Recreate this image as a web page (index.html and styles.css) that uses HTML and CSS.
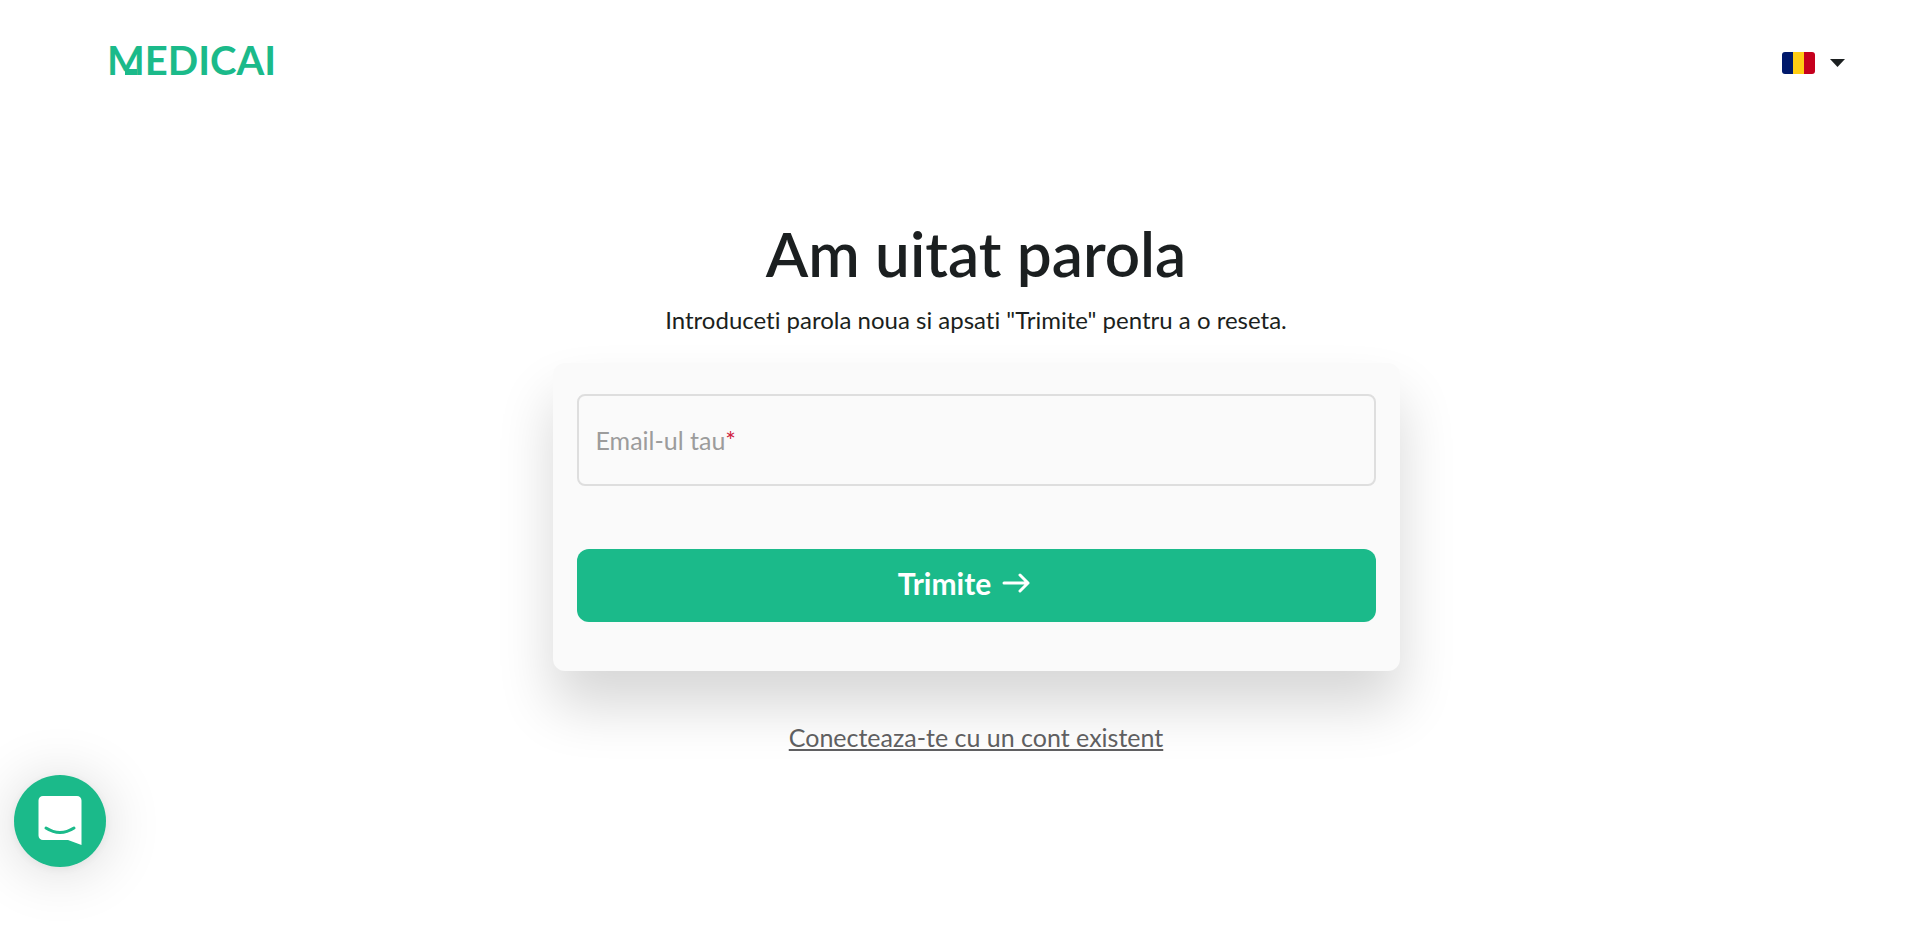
FILE: index.html
```html
<!DOCTYPE html>
<html lang="ro">
<head>
<meta charset="utf-8">
<meta name="viewport" content="width=device-width, initial-scale=1">
<title>Am uitat parola</title>
<link rel="stylesheet" href="styles.css">
</head>
<body>
<header class="topbar">
  <a class="logo" href="#" aria-label="MEDICAI">
    <svg viewBox="0 0 180 60" width="180" height="60" fill="currentColor">
      <text class="logo-text" x="0" y="45">MEDICAI</text>
      <path d="M18 39h12v6H18z"/>
    </svg>
  </a>
  <button class="language" type="button" aria-label="Limba" aria-haspopup="listbox">
    <svg viewBox="0 0 33 22" width="33" height="22">
      <clipPath id="flag"><rect width="33" height="22" rx="3"/></clipPath>
      <g clip-path="url(#flag)">
        <rect width="11" height="22" fill="#00196b"/>
        <rect x="11" width="11" height="22" fill="#ffcd14"/>
        <rect x="22" width="11" height="22" fill="#c5001d"/>
      </g>
    </svg>
    <svg viewBox="0 0 15 8" width="15" height="8"><path d="M0 0h15L7.500 8z" fill="#1b1f20"/></svg>
  </button>
</header>
<main class="content">
  <h1 class="title">Am uitat parola</h1>
  <p class="subtitle">Introduceti parola noua si apsati "Trimite" pentru a o reseta.</p>
  <form class="card">
    <div class="field">
      <input class="field-input" id="email" type="email" required placeholder=" ">
      <label class="field-label" for="email">Email-ul tau<span class="required">*</span></label>
    </div>
    <button class="submit" type="submit">Trimite
      <svg viewBox="0 0 28 20" width="28" height="20" fill="none" stroke="currentColor" stroke-width="3" stroke-linecap="round" stroke-linejoin="round"><path d="M2 10h24M18 2l8 8-8 8"/></svg>
    </button>
  </form>
  <a class="login-link" href="#">Conecteaza-te cu un cont existent</a>
</main>
<button class="chat" type="button" aria-label="Chat">
  <svg viewBox="0 0 44 50" width="44" height="50">
    <path d="M5 0h34a4.500 4.500 0 0 1 4.500 4.500V49L30 44H5a4.500 4.500 0 0 1-4.500-4.500v-35A4.500 4.500 0 0 1 5 0z" fill="#fff"/>
    <path d="M8 32q14 9 28 0" fill="none" stroke="#1bba8a" stroke-width="3" stroke-linecap="round"/>
  </svg>
</button>
</body>
</html>
```
FILE: styles.css
```css
* {
  box-sizing: border-box;
}

body {
  margin: 0;
  min-height: 100vh;
  padding: 30px 75px 40px 107px;
  background: #fff;
  color: #1b1f20;
  font-family: Lato, "Liberation Sans", sans-serif;
  font-size: 24px;
  font-variant-ligatures: none;
  line-height: 32px;
}

button {
  border: 0;
  padding: 0;
  font: inherit;
  cursor: pointer;
}

svg {
  display: block;
}

.topbar {
  display: flex;
  align-items: flex-start;
  justify-content: space-between;
}

.logo {
  color: #1bba8a;
}

.logo-text {
  font-size: 40px;
  font-weight: 700;
}

.language {
  display: flex;
  align-items: center;
  gap: 15px;
  margin-top: 22px;
  background: none;
}

.content {
  display: flex;
  flex-direction: column;
  align-items: center;
  padding-top: 125px;
}

.title {
  margin: 0;
  font-size: 62px;
  font-weight: 600;
  line-height: 76px;
}

.subtitle {
  margin: 13px 0 27px;
}

.card {
  width: 100%;
  max-width: 847px;
  padding: 31px 24px 49px;
  border-radius: 12px;
  background: #fafafa;
  box-shadow: 0 35px 56px rgba(0, 0, 0, 0.16);
}

.field {
  position: relative;
  margin-bottom: 63px;
}

.field-input {
  display: block;
  width: 100%;
  height: 92px;
  padding: 0 18px;
  border: 2px solid #dedede;
  border-radius: 8px;
  background: transparent;
  font: inherit;
}

.field-label {
  position: absolute;
  top: 30px;
  left: 19px;
  color: #9c9c9c;
  font-size: 25px;
}

.field-input:not(:placeholder-shown) + .field-label {
  display: none;
}

.required {
  color: #d0213f;
}

.submit {
  display: flex;
  align-items: center;
  justify-content: center;
  gap: 11px;
  width: 100%;
  min-height: 73px;
  padding: 0 24px 5px 0;
  border-radius: 12px;
  background: #1bba8a;
  color: #fff;
  font-size: 30px;
  font-weight: 700;
}

.login-link {
  margin-top: 50px;
  color: #5f5f61;
  font-size: 25px;
}

.chat {
  position: fixed;
  bottom: 77px;
  left: 14px;
  display: grid;
  place-items: center;
  width: 92px;
  height: 92px;
  border-radius: 50%;
  background: #1bba8a;
  box-shadow: 0 4px 60px rgba(0, 0, 0, 0.16), 0 2px 12px rgba(0, 0, 0, 0.06);
}
```
